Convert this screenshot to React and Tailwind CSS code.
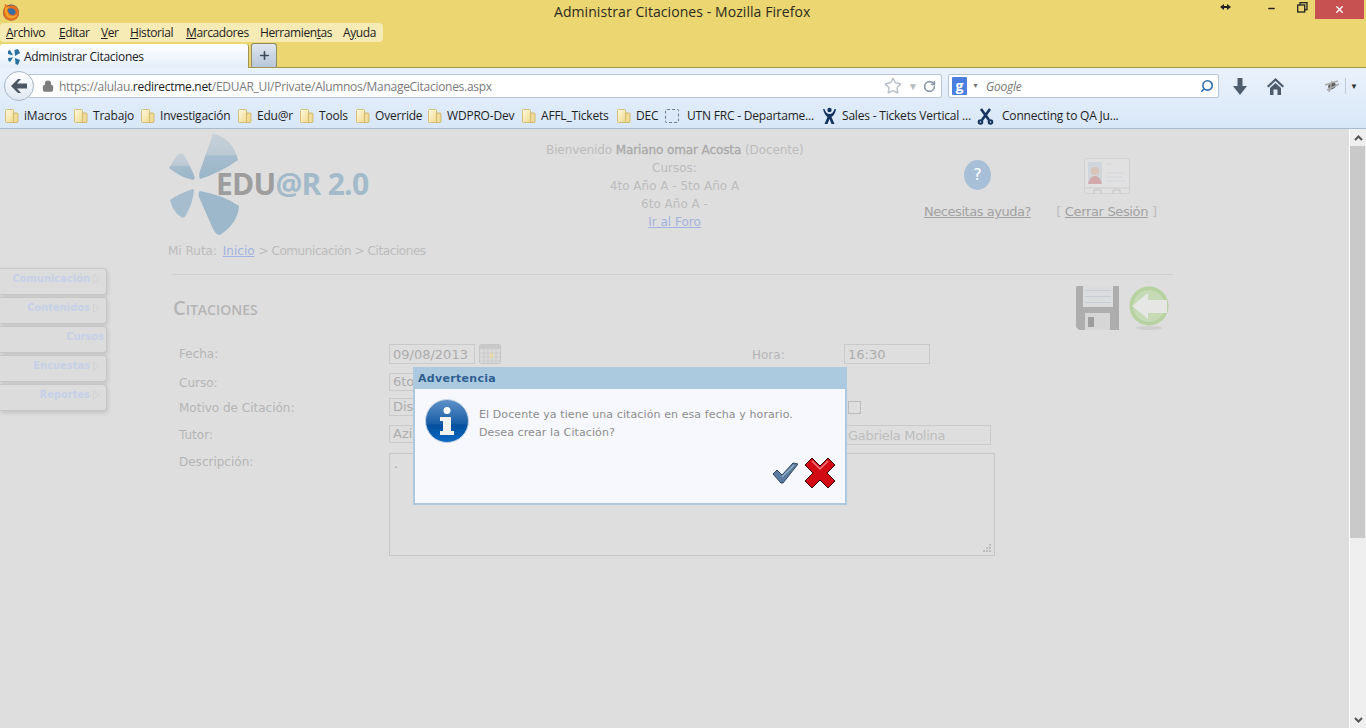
import { Lock, RotateCw, Star, Search, Plus, X, Minus } from 'lucide-react'

const chrome = 'font-["Open_Sans",sans-serif]'
const web = 'font-["DejaVu_Sans",sans-serif]'
const webCondensed = 'font-["DejaVu_Sans_Condensed","DejaVu_Sans",sans-serif]'

const FolderIcon = () => (
  <svg width="16" height="16" viewBox="0 0 16 16" className="shrink-0">
    <defs>
      <linearGradient id="fold" x1="0" y1="0" x2="1" y2="1">
        <stop offset="0" stopColor="#fffbe2" />
        <stop offset="1" stopColor="#efd98c" />
      </linearGradient>
    </defs>
    <path d="M10 5 h3 q1 0 1 1 v7.500 q0 1-1 1 H8z" fill="#f0dc98" stroke="#c9ae5a" strokeWidth=".8" />
    <path d="M1.500 2.500 q0-1 1-1 h6 q1 0 1 1 v11 q0 1-1 1 h-6 q-1 0-1-1z" fill="url(#fold)" stroke="#cdb263" strokeWidth=".8" />
  </svg>
)

const AtlassianIcon = () => (
  <svg width="15" height="18" viewBox="0 0 15 18" className="shrink-0" fill="#15345f">
    <circle cx="7.500" cy="3" r="2.200" />
    <path d="M1 2 q1.500 6 4.500 8 L2.500 17 h3 L7.500 12 L9.500 17 h3 L9.500 10 Q13 8 14 2 h-1.500 Q11 7 7.500 7 T2.500 2z" />
  </svg>
)

const ScissorsIcon = () => (
  <svg width="17" height="17" viewBox="0 0 17 17" className="shrink-0" fill="none" stroke="#15345f" strokeWidth="2.600">
    <path d="M4 1 L12 12 M13 1 L5 12" />
    <circle cx="3.500" cy="14" r="1.800" strokeWidth="2" />
    <circle cx="13.500" cy="14" r="1.800" strokeWidth="2" />
  </svg>
)

const DashedIcon = () => (
  <span className="w-[14px] h-[14px] shrink-0 border border-dashed border-[#6d7a8a] rounded-[2px]" />
)

const bookmarks = [
  { label: 'iMacros', w: 'w-[69px]', Icon: FolderIcon, gap: 'gap-1' },
  { label: 'Trabajo', w: 'w-[67px]', Icon: FolderIcon, gap: 'gap-1' },
  { label: 'Investigación', w: 'w-[97px]', Icon: FolderIcon, gap: 'gap-1' },
  { label: 'Edu@r', w: 'w-[62px]', Icon: FolderIcon, gap: 'gap-1' },
  { label: 'Tools', w: 'w-[56px]', Icon: FolderIcon, gap: 'gap-1' },
  { label: 'Override', w: 'w-[72px]', Icon: FolderIcon, gap: 'gap-1' },
  { label: 'WDPRO-Dev', w: 'w-[94px]', Icon: FolderIcon, gap: 'gap-1' },
  { label: 'AFFL_Tickets', w: 'w-[95px]', Icon: FolderIcon, gap: 'gap-1' },
  { label: 'DEC', w: 'w-[49px]', Icon: FolderIcon, gap: 'gap-1' },
  { label: 'UTN FRC - Departame...', w: 'w-[157px]', Icon: DashedIcon, gap: 'gap-2' },
  { label: 'Sales - Tickets Vertical ...', w: 'w-[155px]', Icon: AtlassianIcon, gap: 'gap-[5px]' },
  { label: 'Connecting to QA Ju...', w: 'w-[160px]', Icon: ScissorsIcon, gap: 'gap-2' },
]

const FirefoxLogo = () => (
  <svg width="18" height="18" viewBox="0 0 18 18">
    <circle cx="9" cy="9.500" r="8" fill="#2c5d98" />
    <path d="M3 3 Q2 1 3.500 1 Q5 3 8 2.500 Q14 1 16.500 7 Q18.500 14 12.500 17 Q5 19 2 13.500 Q0 8 3 3z" fill="#e2701f" />
    <path d="M6 6 Q10 4 13 7 Q15 11 11 12 Q8 12 7 10 Q5 8 6 6z" fill="#3a6ea8" />
    <path d="M3 5 Q5 3 8 4 Q5 5 5 8 Q6 13 11 13 Q14 13 15.500 10 Q15 15 10 15.500 Q2 15 3 5z" fill="#f4a32a" />
  </svg>
)

const TabFavicon = () => (
  <svg width="14" height="16" viewBox="0 0 14 16" className="shrink-0" fill="#27709f">
    <path d="M7.500 1 L11 0 L13 4 L8 7z" />
    <path d="M1 2 L3 1 L6 6.500 L1 5z" />
    <path d="M1 9 L6 8.500 L3 13 L1.500 12z" />
    <path d="M8 9 L13 11 L11 16 L8.500 15z" />
  </svg>
)

function TitleBar() {
  return (
    <div className="relative h-[44px] shrink-0">
      <div className="flex h-[23px] items-center">
        <div className="w-[554px] pl-[2px]"><FirefoxLogo /></div>
        <div className={`${chrome} text-[14px] text-[#2b2b20] w-[658px] tracking-[0.07px]`}>Administrar Citaciones - Mozilla Firefox</div>
        <svg width="11" height="8" viewBox="0 0 11 8" fill="#222" className="ml-[8px] mb-[9px]">
          <path d="M0 4 L4 1 V3 H7 V1 L11 4 L7 7 V5 H4 V7z" />
        </svg>
        <Minus size={9} strokeWidth={4} className="ml-[36px] mb-[6px] text-[#222]" />
        <svg width="11" height="11" viewBox="0 0 11 11" fill="none" stroke="#222" strokeWidth="1.300" className="ml-[21px] mb-[9px]">
          <rect x="3" y=".7" width="7" height="7" />
          <rect x=".7" y="3" width="7" height="7" fill="#ecd672" />
        </svg>
        <div className="ml-[7px] w-[49px] h-[19px] self-start bg-[#c75050] flex items-center justify-center">
          <X size={11} strokeWidth={3} className="text-white" />
        </div>
      </div>
      <div className={`${chrome} w-[383px] h-[19px] bg-[#f6eab5] rounded-[4px] flex items-center pl-[6px] text-[12px] text-[#1d1d1d] tracking-[-0.4px]`}>
        <span className="w-[53px]"><u>A</u>rchivo</span>
        <span className="w-[42px]"><u>E</u>ditar</span>
        <span className="w-[29px]"><u>V</u>er</span>
        <span className="w-[56px]"><u>H</u>istorial</span>
        <span className="w-[74px]"><u>M</u>arcadores</span>
        <span className="w-[83px]">Herramien<u>t</u>as</span>
        <span>A<u>y</u>uda</span>
      </div>
    </div>
  )
}

function TabStrip() {
  return (
    <div className="h-[24px] shrink-0 flex items-end border-b border-[#a39351]">
      <div className="w-[249px] h-[24px] bg-gradient-to-b from-white to-[#e4eefa] rounded-t-[3px] flex items-center pl-[7px] pt-[2px] gap-[3px] border-r border-[#a39351] -mb-px relative">
        <TabFavicon />
        <span className={`${chrome} text-[12px] text-[#222] tracking-[-0.3px]`}>Administrar Citaciones</span>
      </div>
      <div className="ml-[2px] w-[26px] h-[24px] bg-gradient-to-b from-[#dfe7f0] to-[#b7c6d8] border border-[#8f8a60] border-b-0 rounded-t-[3px] flex items-center justify-center">
        <Plus size={13} strokeWidth={3} className="text-[#3f4b5a]" />
      </div>
    </div>
  )
}

function NavBar() {
  return (
    <div className="h-[34px] pt-[2px] flex items-center relative">
      <div className="absolute left-[4px] top-[3px] w-[30px] h-[30px] rounded-full bg-gradient-to-b from-white to-[#dfe8f3] border border-[#a7b5c6] flex items-center justify-center">
        <svg width="16" height="14" viewBox="0 0 16 14" fill="#4a5665">
          <path d="M0 7 L7 0 H10 L6 4.500 H16 V9.500 H6 L10 14 H7z" />
        </svg>
      </div>
      <div className="ml-[28px] w-[914px] h-[24px] bg-white border border-[#b6c5d5] rounded-[2px] flex items-center pl-[13px] pr-[4px]">
        <Lock size={12} fill="#7d7d7d" className="text-[#7d7d7d] shrink-0" strokeWidth={2.5} />
        <span className={`${chrome} ml-[5px] pt-px text-[12px] text-[#7b7b7b] tracking-[-0.29px] whitespace-nowrap w-[825px]`}>
          https://alulau.<span className="text-[#1a1a1a]">redirectme.net</span>/EDUAR_UI/Private/Alumnos/ManageCitaciones.aspx
        </span>
        <Star size={18} className="text-[#b9c0c8] shrink-0" />
        <span className="ml-[6px] text-[10px] text-[#b5bcc4]">▼</span>
        <RotateCw size={13} strokeWidth={3} className="ml-[5px] text-[#8a98a8]" />
      </div>
      <div className="ml-[6px] w-[271px] h-[24px] bg-white border border-[#b6c5d5] rounded-[2px] flex items-center pl-[3px] pr-[4px]">
        <span className={`${chrome} w-[15px] h-[18px] bg-[#4a7fe0] text-white text-[14px] leading-[14px] font-bold flex items-center justify-center rounded-[1px]`}>g</span>
        <span className="ml-[5px] text-[7px] text-[#777]">▼</span>
        <span className={`${chrome} ml-[7px] pt-px italic text-[12px] tracking-[-0.2px] text-[#777] flex-1`}>Google</span>
        <Search size={14} strokeWidth={2.8} className="text-[#2f6fae] -scale-x-100" />
      </div>
      <svg width="14" height="17" viewBox="0 0 14 17" fill="#505d6c" className="ml-[14px]">
        <path d="M4.500 0 H9.500 V8 H14 L7 17 L0 8 H4.500z" />
      </svg>
      <svg width="17" height="17" viewBox="0 0 17 17" fill="#4d5b6b" className="ml-[20px]">
        <path d="M8.500 0 L17 8 L15.500 9.500 L8.500 3 L1.500 9.500 L0 8z" />
        <path d="M8.500 5 L14 10 V17 H10.500 V11.500 H6.500 V17 H3 V10z" />
      </svg>
      <svg width="16" height="16" viewBox="0 0 16 16" className="ml-[40px]">
        <ellipse cx="8" cy="8" rx="4" ry="3" fill="#555" transform="rotate(-30 8 8)" />
        <path d="M1 7 L14 3 M3 12 L15 6 M5 14 L8 3" stroke="#aaa" strokeWidth="1.500" />
      </svg>
      <span className="ml-[5px] w-px h-[16px] bg-[#c2ccd8]" />
      <span className="ml-[4px] text-[8px] text-[#333]">▼</span>
    </div>
  )
}

function BookmarksBar() {
  return (
    <div className={`${chrome} h-[27px] pt-[2px] flex items-center pl-[4px] text-[12px] text-[#1f1f1f] tracking-[-0.2px] border-b border-[#a9bbce]`}>
      {bookmarks.map(({ label, w, Icon, gap }) => (
        <div key={label} className={`${w} ${gap} shrink-0 flex items-center whitespace-nowrap`}>
          <Icon />
          <span>{label}</span>
        </div>
      ))}
    </div>
  )
}

const sideItems = [
  { label: 'Comunicación', arrow: true },
  { label: 'Contenidos', arrow: true },
  { label: 'Cursos', arrow: false },
  { label: 'Encuestas', arrow: true },
  { label: 'Reportes', arrow: true },
]

function Sidebar() {
  return (
    <div className={`${webCondensed} w-[107px] shrink-0 pt-[139px] flex flex-col gap-[2px]`}>
      {sideItems.map(({ label, arrow }) => (
        <div key={label} className="h-[27px] bg-[#dcdcdc] border border-[#c6c6c6] border-l-0 rounded-r-[4px] shadow-[1px_2px_4px_rgba(0,0,0,0.12)] flex justify-end gap-[3px] pt-[3px] pr-[2px] text-[11px] font-bold text-[#c6d0e8]">
          <span className="leading-[13px]">{label}</span>
          {arrow && (
            <svg width="7" height="10" viewBox="0 0 7 10" fill="none" stroke="#d2d2d2" className="mt-[2px] mr-[4px]">
              <path d="M.5 .5 L6 5 L.5 9.500z" />
            </svg>
          )}
        </div>
      ))}
    </div>
  )
}

function Logo() {
  return (
    <svg width="72" height="104" viewBox="0 0 72 104" className="shrink-0">
      <defs>
        <linearGradient id="petal" x1="0" y1="0" x2="0" y2="1">
          <stop offset="0" stopColor="#c6d0d9" />
          <stop offset=".45" stopColor="#bcc9d4" />
          <stop offset=".5" stopColor="#a4bccd" />
          <stop offset="1" stopColor="#9ab6c9" />
        </linearGradient>
      </defs>
      <path d="M32 46 Q30 42 33 35 L45 1 Q64 4 70 27 Q52 40 32 46z" fill="url(#petal)" />
      <path d="M25 47 Q12 44 1 35 L10 21 Q13 19 16 22 Q24 36 27 45z" fill="url(#petal)" />
      <path d="M25 56 Q12 60 2 67 Q5 79 13 84 Q16 86 18 82 Q25 70 26 57z" fill="#a5bdcf" />
      <path d="M32 58 Q55 62 71 73 Q70 90 52 102 Q48 102 45 96 L31 64 Q30 59 32 58z" fill="#9db8cb" />
    </svg>
  )
}

function Header() {
  return (
    <div className="h-[145px] pl-[61px]">
      <div className="flex h-[112px]">
        <div className="w-[378px] pt-[4px] flex items-start">
          <Logo />
          <span className={`${chrome} -ml-[24px] mt-[29px] text-[30px] leading-[44px] font-bold tracking-[-0.75px] whitespace-nowrap text-[#a3bacb]`}>
            <span className="text-[#9d9d9d]">EDU</span>@R 2.0
          </span>
        </div>
        <div className="w-[257px] pt-[12px] text-center text-[12px] leading-[18px] text-[#bcbcbc] whitespace-nowrap">
          <div className="tracking-[-0.1px]">Bienvenido <span className="text-[#a9a9a9] [-webkit-text-stroke:0.3px_#a9a9a9]">Mariano omar Acosta</span> (Docente)</div>
          <div>Cursos:</div>
          <div>4to Año A - 5to Año A</div>
          <div>6to Año A -</div>
          <div className="text-[#a3b3df] underline">Ir al Foro</div>
        </div>
        <div className="ml-[121px] w-[107px] pt-[31px] flex flex-col items-center">
          <span className="w-[27px] h-[30px] rounded-[50%] bg-[#a8c0d7] text-white text-[16px] flex items-center justify-center">?</span>
          <span className="mt-[12px] text-[#a2a2a2] text-[13px] tracking-[-0.45px] underline whitespace-nowrap">Necesitas ayuda?</span>
        </div>
        <div className="ml-[25px] w-[101px] pt-[29px] flex flex-col items-center">
          <svg width="46" height="36" viewBox="0 0 46 36" fill="none">
            <rect x=".5" y=".5" width="45" height="35" rx="2" stroke="#d0d0d0" fill="#e1e1e1" />
            <rect x="4" y="4" width="14" height="22" fill="#d0d6dc" />
            <circle cx="11" cy="13" r="4" fill="#d8c4b8" />
            <path d="M4 26 Q6 18 11 18 T18 26z" fill="#d3aaaa" />
            <path d="M22 6 h6 M22 15 h19 M22 19 h17 M22 23 h19" stroke="#d3d8dd" />
            <path d="M1 30 h44" stroke="#cbcbcb" />
            <path d="M10 35 v-3 h7 v3 M29 35 v-3 h7 v3" stroke="#c2c2c2" />
          </svg>
          <span className="mt-[8px] text-[13px] text-[#a2a2a2] tracking-[-0.35px] whitespace-nowrap">
            <span className="text-[#bbb]">[ </span><span className="underline">Cerrar Sesión</span><span className="text-[#bbb]"> ]</span>
          </span>
        </div>
      </div>
      <div className="h-[18px] pt-px text-[12px] leading-[18px] text-[#bcbcbc] whitespace-nowrap">
        Mi Ruta: <span className="ml-[2px] text-[#a3b3df] underline">Inicio</span> <span className="tracking-[-0.42px]">&gt; Comunicación &gt; Citaciones</span>
      </div>
    </div>
  )
}

const fieldBox = 'h-[18px] border border-[#cacaca] text-[13px] leading-[16px] text-[#acacac] pl-[3px] whitespace-nowrap overflow-hidden'

function SaveIcon() {
  return (
    <svg width="43" height="44" viewBox="0 0 43 44">
      <path d="M1 0 H43 V44 H3 L0 41 V1z" fill="#adadad" />
      <rect x="7" y="0" width="30" height="21" fill="#dadcdd" />
      <path d="M9 4.500 h26 M9 10.500 h26 M9 16.500 h26" stroke="#c6ccd1" />
      <rect x="9" y="27" width="25" height="17" fill="#d6d6d6" />
      <rect x="12" y="31" width="6" height="10" fill="#9e9e9e" />
    </svg>
  )
}

function BackIcon() {
  return (
    <svg width="40" height="44" viewBox="0 0 40 44">
      <ellipse cx="20" cy="42" rx="13" ry="2" fill="#cfcfcf" />
      <circle cx="20" cy="20" r="19.500" fill="#b6d2a0" />
      <circle cx="20" cy="20" r="16" fill="#c5dab5" />
      <path d="M3 20 L19 7 V14 H38 V27 H19 V33z" fill="#e6e6e4" />
    </svg>
  )
}

function CalendarIcon() {
  return (
    <svg width="22" height="20" viewBox="0 0 22 20" fill="none">
      <rect x=".5" y=".5" width="21" height="19" rx="1" fill="#dadada" stroke="#c6c6c6" />
      <rect x="1" y="1" width="20" height="4" fill="#c9c9c9" />
      <path d="M1 9 h20 M1 13 h20 M1 17 h20 M5 5 v14 M9 5 v14 M13 5 v14 M17 5 v14" stroke="#cbcbcb" />
      <rect x="11" y="9" width="3" height="5" fill="#e6d9a0" />
    </svg>
  )
}

function Form() {
  const labelCls = 'w-[217px] pl-[7px] pt-[2px] text-[#b5b5b5] text-[12px] leading-[16px]'
  return (
    <div className="pl-[65px] pr-[176px] text-[12px]">
      <div className="flex items-start justify-between h-[57px] border-t border-[#cfcfcf] pr-[4px]">
        <h1 className={`${chrome} mt-[21px] ml-px text-[#b5b5b5] font-semibold text-[20px] leading-[24px] [font-variant:small-caps]`}>Citaciones</h1>
        <div className="flex items-start gap-[10px] mt-[11px]">
          <SaveIcon />
          <BackIcon />
        </div>
      </div>
      <div className="flex mt-[13px] h-[20px]">
        <span className={labelCls}>Fecha:</span>
        <span className={`${fieldBox} w-[86px] h-[20px] leading-[20px]`}>09/08/2013</span>
        <span className="ml-[4px]"><CalendarIcon /></span>
        <span className="ml-[251px] w-[92px] pt-[2px] text-[#b5b5b5]">Hora:</span>
        <span className={`${fieldBox} w-[86px] h-[20px] leading-[19px]`}>16:30</span>
      </div>
      <div className="flex mt-[9px]">
        <span className={labelCls}>Curso:</span>
        <span className={`${fieldBox} w-[200px]`}>6to</span>
      </div>
      <div className="flex mt-[7px]">
        <span className={labelCls}>Motivo de Citación:</span>
        <span className={`${fieldBox} w-[200px]`}>Dis</span>
        <span className="ml-[259px] mt-[3px] w-[13px] h-[13px] border border-[#bcbcbc]" />
      </div>
      <div className="flex mt-[9px]">
        <span className={labelCls}>Tutor:</span>
        <span className={`${fieldBox} w-[200px]`}>Azi</span>
        <span className={`${fieldBox} ml-[255px] w-[147px] h-[20px] leading-[19px] tracking-[-0.3px] text-[#bdbdbd]`}>Gabriela Molina</span>
      </div>
      <div className="flex mt-[8px]">
        <span className={`${labelCls} -mt-px`}>Descripción:</span>
        <div className="relative w-[606px] h-[103px] border border-[#c6c6c6] pl-[4px] pt-[1px] text-[#a5a5a5]">
          .
          <svg width="9" height="9" viewBox="0 0 9 9" fill="#bbb" className="absolute right-[2px] bottom-[2px]">
            <rect x="6" y="0" width="2" height="2" /><rect x="3" y="3" width="2" height="2" /><rect x="6" y="3" width="2" height="2" />
            <rect x="0" y="6" width="2" height="2" /><rect x="3" y="6" width="2" height="2" /><rect x="6" y="6" width="2" height="2" />
          </svg>
        </div>
      </div>
    </div>
  )
}

function InfoIcon() {
  return (
    <svg width="44" height="44" viewBox="0 0 44 44" className="shrink-0">
      <defs>
        <linearGradient id="info" x1="0" y1="0" x2="0" y2="1">
          <stop offset="0" stopColor="#5f93c8" />
          <stop offset=".55" stopColor="#1b5ea8" />
          <stop offset=".6" stopColor="#04509f" />
          <stop offset="1" stopColor="#0b6ac4" />
        </linearGradient>
      </defs>
      <circle cx="22" cy="22" r="21.500" fill="url(#info)" stroke="#c4d3e4" />
      <circle cx="22" cy="11.500" r="3.500" fill="#fff" />
      <path d="M15 18 H26 V32 H29 V36 H15 V32 H18 V22 H15z" fill="#f2f2ee" />
    </svg>
  )
}

function Modal() {
  return (
    <div className={`${web} absolute left-[413px] top-[367px] w-[434px] h-[138px] border-2 border-[#abcae0] bg-[#f6f8fd] flex flex-col`}>
      <div className="h-[21px] -mt-px shrink-0 bg-[#abcae0] pl-[3px] pt-px text-[11px] tracking-[0.3px] leading-[20px] font-bold text-[#2f5f90]">Advertencia</div>
      <div className="flex pl-[10px] pr-[10px] pt-[10px]">
        <InfoIcon />
        <div className="ml-[10px] mt-[7px] text-[11px] tracking-[0.1px] leading-[18px] text-[#8c8c8c] whitespace-nowrap">
          <div>El Docente ya tiene una citación en esa fecha y horario.</div>
          <div>Desea crear la Citación?</div>
        </div>
      </div>
      <div className="flex justify-end items-center gap-[7px] pr-[10px] mt-[15px]">
        <svg width="26" height="22" viewBox="0 0 26 22">
          <path d="M1 12 L5 8 L10 13 L21 1 L26 2 L11 21 H9z" fill="#5b7c9f" stroke="#2f4763" />
          <path d="M10 15 L22 3" stroke="#93adc8" strokeWidth="1.500" />
        </svg>
        <svg width="30" height="30" viewBox="0 0 30 30">
          <path d="M7 0 L15 8 L23 0 L30 7 L22 15 L30 23 L23 30 L15 22 L7 30 L0 23 L8 15 L0 7z" fill="#d10a14" stroke="#3d0808" />
          <path d="M7 3 L15 11 L23 3" stroke="#f47a80" strokeWidth="1.500" fill="none" />
        </svg>
      </div>
    </div>
  )
}

function Scrollbar() {
  return (
    <div className="w-[17px] shrink-0 bg-[#efefef] border-l border-white flex flex-col">
      <div className="h-[17px] flex items-center justify-center">
        <svg width="9" height="6" viewBox="0 0 9 6" fill="none" stroke="#555" strokeWidth="2"><path d="M1 5 L4.500 1.500 L8 5" /></svg>
      </div>
      <div className="h-[392px] mr-px bg-[#c9c9c9]" />
      <div className="mt-auto h-[17px] flex items-center justify-center">
        <svg width="9" height="6" viewBox="0 0 9 6" fill="none" stroke="#555" strokeWidth="2"><path d="M1 1 L4.500 4.500 L8 1" /></svg>
      </div>
    </div>
  )
}

export default function App() {
  return (
    <div className="relative w-[1366px] h-[728px] overflow-hidden flex flex-col bg-[#dedede]">
      <div className="bg-[#ecd672]">
        <TitleBar />
        <TabStrip />
      </div>
      <div className="bg-gradient-to-b from-[#eaf2fc] to-[#d8e7f7]">
        <NavBar />
        <BookmarksBar />
      </div>
      <div className="flex-1 flex min-h-0">
        <Sidebar />
        <div className={`${web} flex-1 min-w-0`}>
          <Header />
          <Form />
        </div>
        <Scrollbar />
      </div>
      <Modal />
    </div>
  )
}
